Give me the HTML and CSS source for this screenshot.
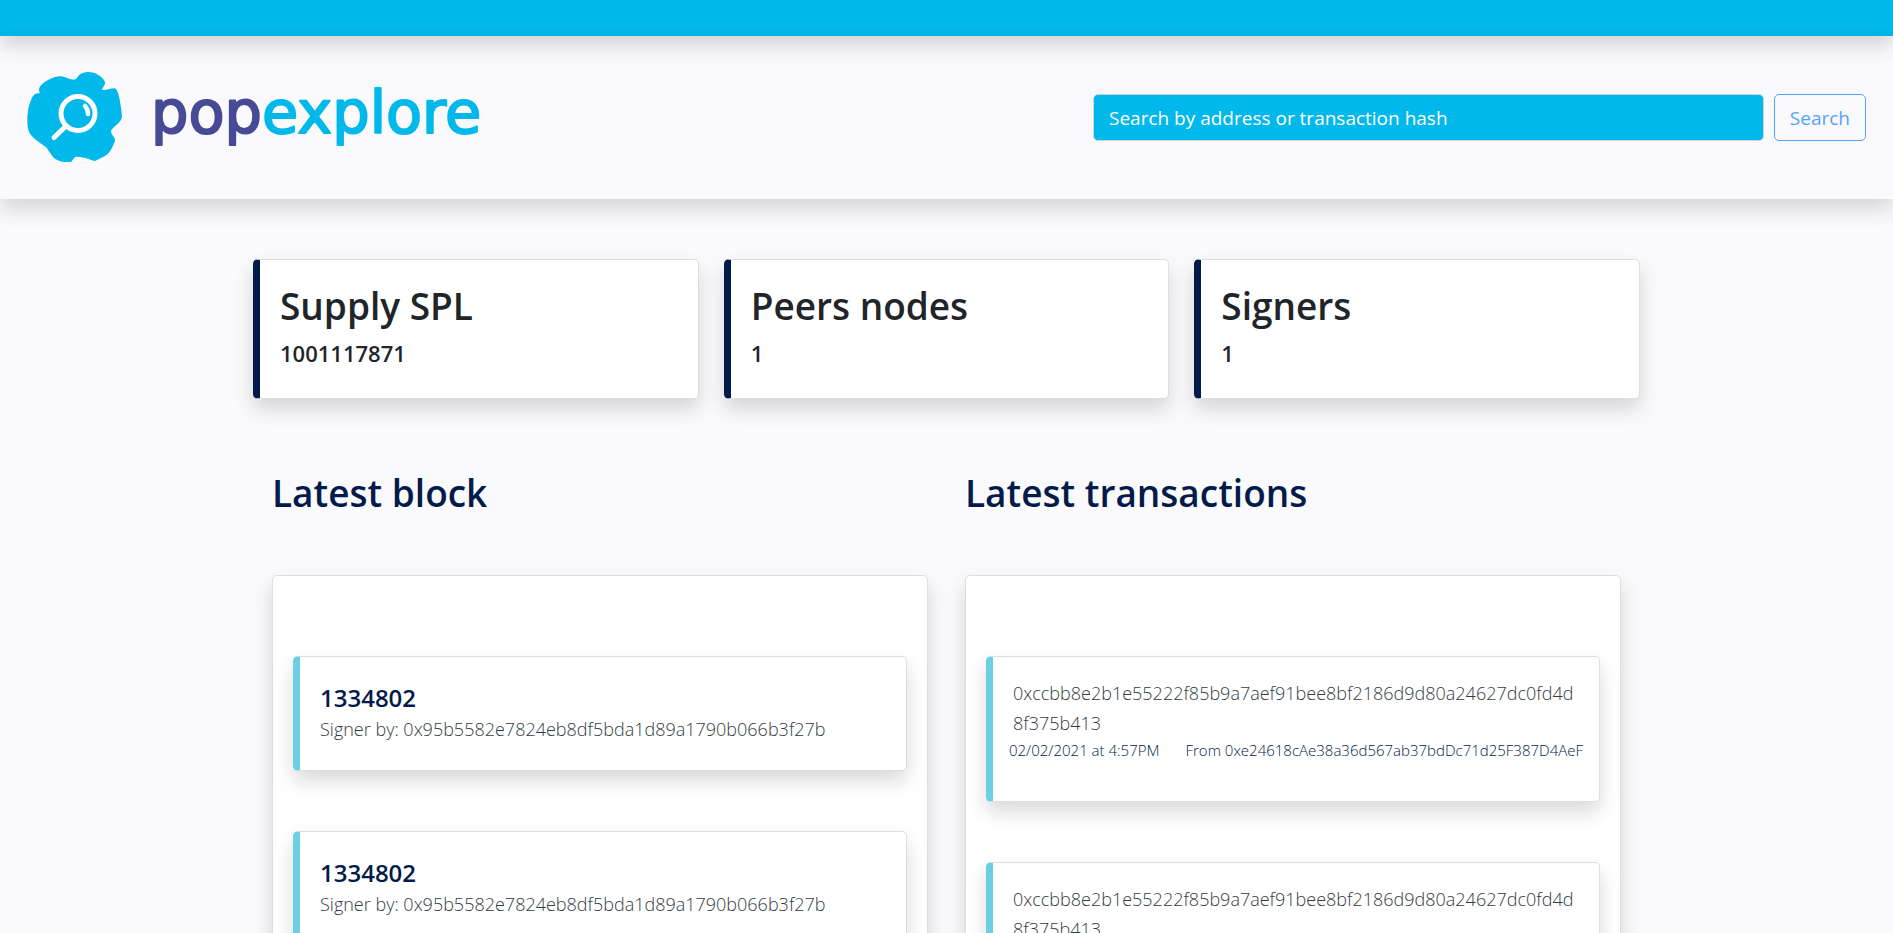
FILE: index.html
```html
<!DOCTYPE html>
<html lang="en">
<head>
<meta charset="utf-8">
<title>popexplore</title>
<meta name="viewport" content="width=device-width, initial-scale=1">
<link rel="stylesheet" href="styles.css">
</head>
<body>
<div class="topbar"></div>
<header class="header">
  <a class="brand" href="#" aria-label="popexplore home">
    <svg class="brand-mark" viewBox="0 0 95 90" width="95" height="90" aria-hidden="true">
      <path fill="#00b8e9" d="M13 21C10 16 14 12 21 8C28 4 34 3 40 6Q48 9 50 6Q53 0 61 0C69 0 76 5 78 10C79 13 73 18 76 18C82 18 87 15 89 17C92 20 94 35 95 44C95 51 85 55 84 59C84 63 89 66 88 69Q83 82 78 84L68 89C65 89 56 84 48 85L44 90C36 91 28 88 26 85L19 75C13 71 5 66 2 60C-1 51 0 34 6 24Q8 21 13 21Z"/>
      <g fill="none" stroke="#fff" stroke-linecap="round">
        <circle cx="51" cy="41.500" r="17" stroke-width="5"/>
        <path stroke-width="5" d="M39 54L27 65.500"/>
        <path stroke-width="4.500" d="M58 34Q61 37 61 42"/>
      </g>
    </svg>
    <svg class="brand-name" viewBox="0 0 330 80" width="330" height="80" aria-hidden="true">
      <text x="0" y="61"><tspan class="name-pop">pop</tspan><tspan class="name-explore">explore</tspan></text>
    </svg>
  </a>
  <form class="search">
    <input class="search-input" type="text" placeholder="Search by address or transaction hash" aria-label="Search by address or transaction hash">
    <button class="search-button" type="button">Search</button>
  </form>
</header>
<main class="page">
  <section class="stats">
    <article class="card stat"><h2 class="title">Supply SPL</h2><p class="number">1001117871</p></article>
    <article class="card stat"><h2 class="title">Peers nodes</h2><p class="number">1</p></article>
    <article class="card stat"><h2 class="title">Signers</h2><p class="number">1</p></article>
  </section>
  <div class="columns">
    <section class="column">
      <h2 class="title heading">Latest block</h2>
      <div class="card panel">
        <article class="card item">
          <h3 class="number">1334802</h3>
          <p class="hash">Signer by: 0x95b5582e7824eb8df5bda1d89a1790b066b3f27b</p>
        </article>
        <article class="card item">
          <h3 class="number">1334802</h3>
          <p class="hash">Signer by: 0x95b5582e7824eb8df5bda1d89a1790b066b3f27b</p>
        </article>
      </div>
    </section>
    <section class="column">
      <h2 class="title heading">Latest transactions</h2>
      <div class="card panel">
        <article class="card item transaction">
          <p class="hash">0xccbb8e2b1e55222f85b9a7aef91bee8bf2186d9d80a24627dc0fd4d<wbr>8f375b413</p>
          <div class="meta"><span>02/02/2021 at 4:57PM</span><span>From 0xe24618cAe38a36d567ab37bdDc71d25F387D4AeF</span></div>
        </article>
        <article class="card item transaction">
          <p class="hash">0xccbb8e2b1e55222f85b9a7aef91bee8bf2186d9d80a24627dc0fd4d<wbr>8f375b413</p>
          <div class="meta"><span>02/02/2021 at 4:57PM</span><span>From 0xe24618cAe38a36d567ab37bdDc71d25F387D4AeF</span></div>
        </article>
      </div>
    </section>
  </div>
</main>
</body>
</html>
```
FILE: styles.css
```css
* { box-sizing: border-box; }

body {
  margin: 0;
  height: 100vh;
  overflow: hidden;
  background: #fafafc;
  color: #212529;
  font-family: "Segoe UI", "Open Sans", "Noto Sans", sans-serif;
}

h2, h3, p { margin: 0; }

.topbar {
  height: 36px;
  background: #00b8e9;
}

.topbar, .header { box-shadow: 0 10px 20px rgba(0, 0, 0, 0.15); }

.header {
  display: flex;
  justify-content: space-between;
  align-items: flex-start;
  padding: 36px 27px 37px;
}

.brand {
  display: flex;
  gap: 29px;
}

.brand-name {
  font-family: "DejaVu Sans", sans-serif;
  font-size: 59px;
  font-weight: 400;
  overflow: visible;
  stroke-width: 2;
  stroke-linejoin: round;
}

.name-pop { fill: #474a94; stroke: #474a94; }
.name-explore { fill: #00b8e9; stroke: #00b8e9; }

.search {
  display: flex;
  flex: 0 1 773px;
  gap: 10px;
  padding-top: 22px;
}

.search-input, .search-button {
  height: 47px;
  border-radius: 5px;
  font: inherit;
  font-size: 19px;
}

.search-input {
  flex: 1;
  min-width: 0;
  padding: 0 15px;
  border: 1px solid #ced4da;
  background: #00b8e9;
  color: #fff;
}

.search-input::placeholder { color: #fff; opacity: 1; }

.search-button {
  padding: 0 15px;
  border: 1px solid #54a4fc;
  background: transparent;
  color: #54a4fc;
}

.page {
  width: min(1387px, 94%);
  margin: 0 auto;
  padding-top: 60px;
}

.card {
  border: 1px solid #dedede;
  border-radius: 5px;
  background: #fff;
  box-shadow: 0 10px 20px rgba(0, 0, 0, 0.15);
}

.stats {
  display: grid;
  grid-template-columns: repeat(3, 1fr);
  gap: 25px;
}

.stat {
  padding: 20px 20px 27px;
  border-left: 7px solid #031b4a;
}

.stat .number {
  margin-top: 3px;
  font-size: 22px;
}

.title {
  font-size: 37px;
  font-weight: 600;
  line-height: 52px;
}

.number {
  font-size: 24px;
  font-weight: 600;
  line-height: 36px;
}

.columns {
  display: grid;
  grid-template-columns: repeat(2, minmax(0, 1fr));
  gap: 37px;
  padding: 68px 19px 0;
}

.heading {
  margin-bottom: 56px;
  color: #031b4a;
}

.panel {
  display: grid;
  gap: 60px;
  padding: 80px 20px;
}

.item {
  padding: 24px 20px 26px;
  border-left: 7px solid #6bd0e1;
}

.item .number {
  line-height: 34px;
  color: #031b4a;
}

.item .hash { line-height: 29px; }

.hash {
  color: #333b43;
  font-size: 18px;
  font-weight: 300;
}

.transaction { padding: 21px 16px 38px; }

.transaction .hash {
  padding: 0 4px;
  line-height: 30px;
}

.meta {
  display: flex;
  justify-content: space-between;
  color: #031b4a;
  font-size: 15px;
  font-weight: 300;
  line-height: 25px;
  white-space: nowrap;
}
```
